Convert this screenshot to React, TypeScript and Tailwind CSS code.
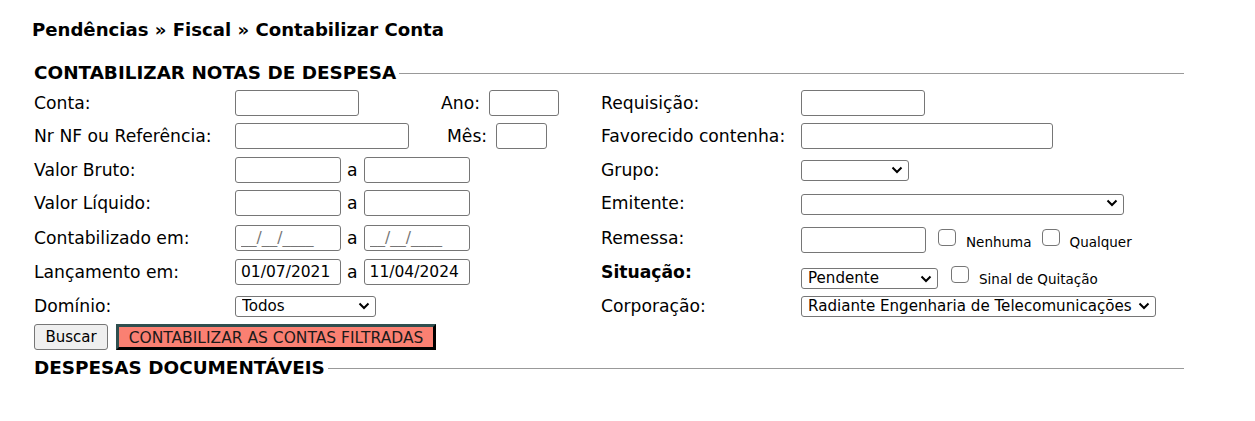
import React from 'react';

const inputCls =
  'h-[26px] border border-[#767676] rounded-[3px] bg-white px-[5px] text-[15.5px] text-black outline-none placeholder:text-[#757575]';

const Chevron = () => (
  <svg
    className="pointer-events-none absolute right-[6px] top-1/2 -translate-y-1/2"
    width="12"
    height="8"
    viewBox="0 0 12 8"
    fill="none"
  >
    <path d="M1.5 1.5 L6 6 L10.5 1.5" stroke="#000" strokeWidth="2" />
  </svg>
);

const Select = ({ width, value }: { width: string; value?: string }) => (
  <div className={`relative h-[21px] shrink-0 ${width}`}>
    <select
      defaultValue={value ?? ''}
      className="h-full w-full appearance-none border border-[#767676] rounded-[3px] bg-white pl-[6px] pr-[16px] text-[15.1px] leading-[19px] text-black outline-none"
    >
      <option value={value ?? ''}>{value ?? ''}</option>
    </select>
    <Chevron />
  </div>
);

const Check = ({ className = '' }: { className?: string }) => (
  <label className={`block shrink-0 ${className}`}>
    <input type="checkbox" className="sr-only" />
    <span className="block w-[18px] h-[17px] border border-[#767676] rounded-[4px] bg-white" />
  </label>
);

const SectionTitle = ({ children }: { children: React.ReactNode }) => (
  <div className="flex items-center w-[1150px] h-[20px]">
    <h2 className="text-[18.4px] font-bold leading-[20px] pr-[3px] whitespace-nowrap">
      {children}
    </h2>
    <div className="flex-1 h-px bg-[#999]" />
  </div>
);

export default function App() {
  return (
    <div className="w-[1255px] h-[421px] bg-white text-black font-['DejaVu_Sans',Verdana,sans-serif] pl-[32px] pt-[20px]">
      <h1 className="text-[18.1px] font-bold leading-[20px]">
        Pendências » Fiscal » Contabilizar Conta
      </h1>

      <div className="ml-[2px] mt-[23px]">
        <SectionTitle>CONTABILIZAR NOTAS DE DESPESA</SectionTitle>

        {/* Filtros */}
        <div className="mt-[3px] grid grid-cols-[201px_366px_200px_1fr] grid-rows-[33px_34px_33px_34px_35px_34px_33px] items-center text-[17.2px] leading-[20px]">
          {/* linha 1 */}
          <span>Conta:</span>
          <div className="flex items-center">
            <input className={`${inputCls} w-[124px]`} />
            <span className="ml-[82px]">Ano:</span>
            <input className={`${inputCls} ml-[9px] w-[70px]`} />
          </div>
          <span>Requisição:</span>
          <input className={`${inputCls} w-[124px]`} />

          {/* linha 2 */}
          <span>Nr NF ou Referência:</span>
          <div className="flex items-center">
            <input className={`${inputCls} w-[174px]`} />
            <span className="ml-[38px]">Mês:</span>
            <input className={`${inputCls} ml-[9px] w-[51px]`} />
          </div>
          <span>Favorecido contenha:</span>
          <input className={`${inputCls} w-[252px]`} />

          {/* linha 3 */}
          <span>Valor Bruto:</span>
          <div className="flex items-center gap-[6px]">
            <input className={`${inputCls} w-[106px]`} />
            <span>a</span>
            <input className={`${inputCls} w-[106px]`} />
          </div>
          <span>Grupo:</span>
          <Select width="w-[108px]" />

          {/* linha 4 */}
          <span>Valor Líquido:</span>
          <div className="flex items-center gap-[6px]">
            <input className={`${inputCls} w-[106px]`} />
            <span>a</span>
            <input className={`${inputCls} w-[106px]`} />
          </div>
          <span>Emitente:</span>
          <Select width="w-[323px]" />

          {/* linha 5 */}
          <span>Contabilizado em:</span>
          <div className="flex items-center gap-[6px]">
            <input className={`${inputCls} w-[106px]`} placeholder="__/__/____" />
            <span>a</span>
            <input className={`${inputCls} w-[106px]`} placeholder="__/__/____" />
          </div>
          <span>Remessa:</span>
          <div className="self-start mt-[7px] flex items-start text-[13.5px] leading-[16px]">
            <input className={`${inputCls} w-[125px] shrink-0`} />
            <Check className="ml-[12px] mt-[2px]" />
            <span className="ml-[10px] mt-[7px]">Nenhuma</span>
            <Check className="ml-[10px] mt-[2px]" />
            <span className="ml-[10px] mt-[7px]">Qualquer</span>
          </div>

          {/* linha 6 */}
          <span>Lançamento em:</span>
          <div className="flex items-center gap-[6px]">
            <input className={`${inputCls} w-[106px]`} defaultValue="01/07/2021" />
            <span>a</span>
            <input className={`${inputCls} w-[106px]`} defaultValue="11/04/2024" />
          </div>
          <span className="font-bold">Situação:</span>
          <div className="self-start mt-[11px] flex items-start text-[13.5px] leading-[16px]">
            <div className="mt-[2px]">
              <Select width="w-[137px]" value="Pendente" />
            </div>
            <Check className="ml-[13px]" />
            <span className="ml-[10px] mt-[5px]">Sinal de Quitação</span>
          </div>

          {/* linha 7 */}
          <span>Domínio:</span>
          <Select width="w-[141px]" value="Todos" />
          <span>Corporação:</span>
          <Select width="w-[355px]" value="Radiante Engenharia de Telecomunicações" />
        </div>

        {/* Ações */}
        <div className="mt-[2px] flex items-center gap-[8px] text-[15.5px]">
          <button className="h-[26px] w-[74px] border border-[#767676] rounded-[3px] bg-[#efefef] text-black text-[15px]">
            Buscar
          </button>
          <button className="h-[26px] w-[320px] border-[3px] border-t-[#2f4f4f] border-l-[#2f4f4f] border-b-black border-r-black bg-[#fa8072] text-[#1a1a1a]">
            CONTABILIZAR AS CONTAS FILTRADAS
          </button>
        </div>

        <div className="mt-[8px]">
          <SectionTitle>DESPESAS DOCUMENTÁVEIS</SectionTitle>
        </div>
      </div>
    </div>
  );
}
